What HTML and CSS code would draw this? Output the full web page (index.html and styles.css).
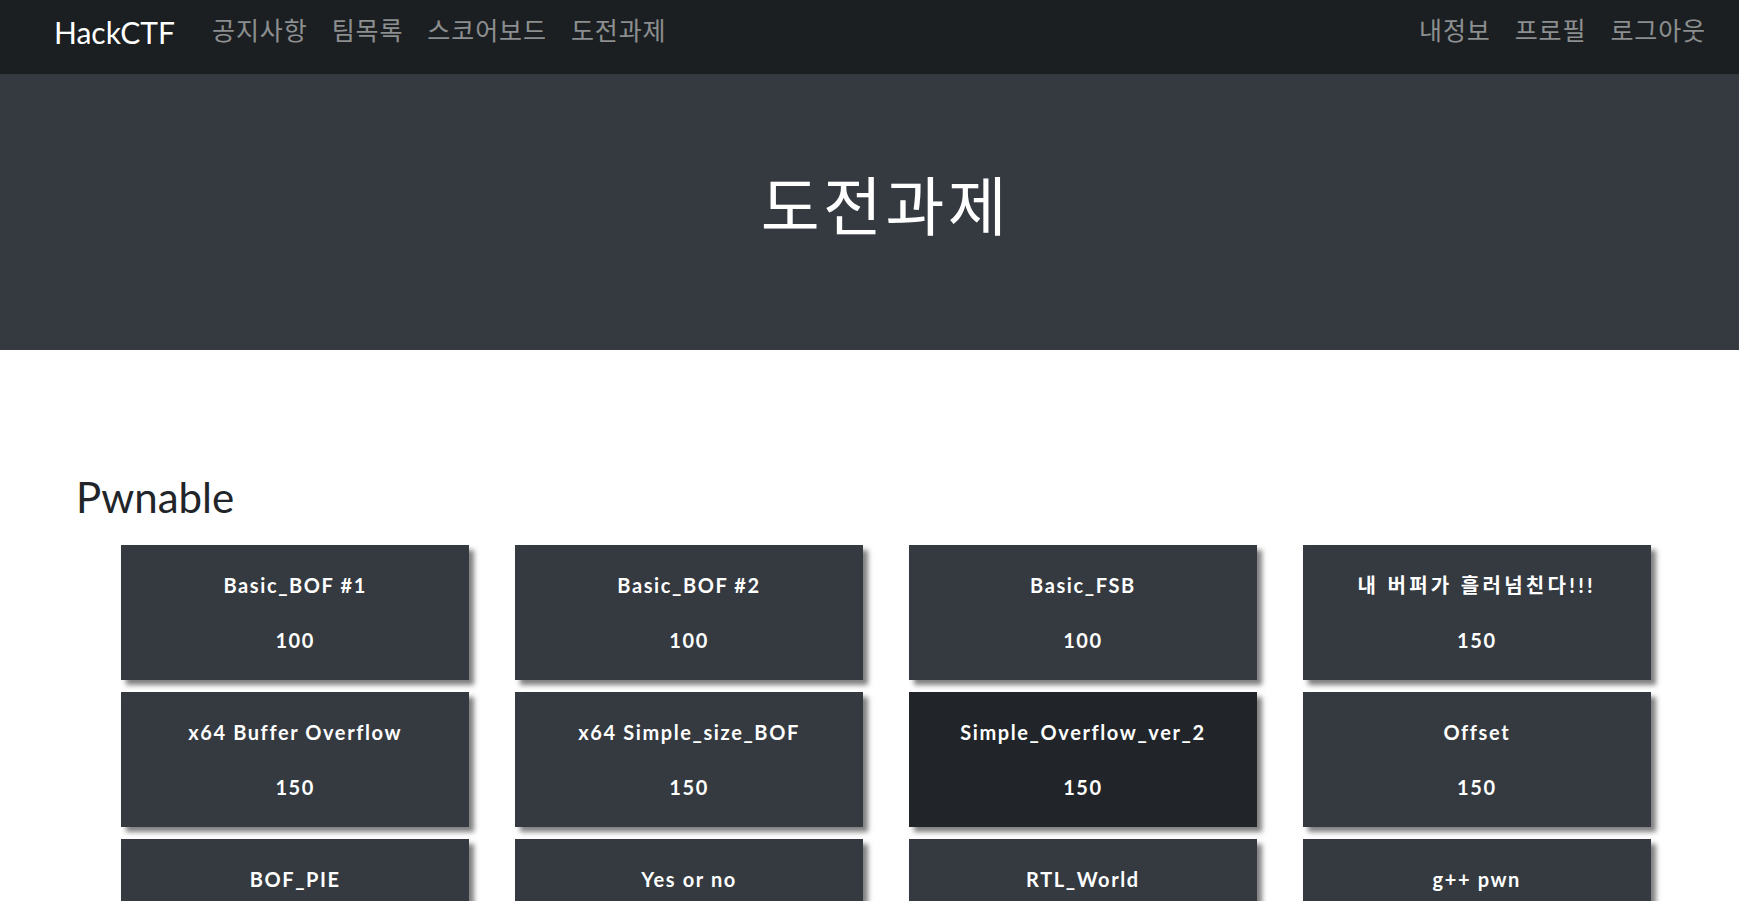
FILE: index.html
```html
<!DOCTYPE html>
<html lang="ko">
<head>
<meta charset="utf-8">
<title>HackCTF - 도전과제</title>
<link rel="stylesheet" href="styles.css">
</head>
<body>
<nav class="navbar">
  <a class="brand" href="#">HackCTF</a>
  <ul class="nav-left">
    <li><a href="#">공지사항</a></li>
    <li><a href="#">팀목록</a></li>
    <li><a href="#">스코어보드</a></li>
    <li><a href="#">도전과제</a></li>
  </ul>
  <ul class="nav-right">
    <li><a href="#">내정보</a></li>
    <li><a href="#">프로필</a></li>
    <li><a href="#">로그아웃</a></li>
  </ul>
</nav>
<header class="hero">
  <h1>도전과제</h1>
</header>
<main class="main">
  <h2 class="category">Pwnable</h2>
  <div class="grid">
    <a class="card" href="#"><span class="title">Basic_BOF #1</span><span class="points">100</span></a>
    <a class="card" href="#"><span class="title">Basic_BOF #2</span><span class="points">100</span></a>
    <a class="card" href="#"><span class="title">Basic_FSB</span><span class="points">100</span></a>
    <a class="card" href="#"><span class="title title-ko">내 버퍼가 흘러넘친다!!!</span><span class="points">150</span></a>
    <a class="card" href="#"><span class="title">x64 Buffer Overflow</span><span class="points">150</span></a>
    <a class="card" href="#"><span class="title">x64 Simple_size_BOF</span><span class="points">150</span></a>
    <a class="card card-active" href="#"><span class="title">Simple_Overflow_ver_2</span><span class="points">150</span></a>
    <a class="card" href="#"><span class="title">Offset</span><span class="points">150</span></a>
    <a class="card" href="#"><span class="title">BOF_PIE</span><span class="points">150</span></a>
    <a class="card" href="#"><span class="title">Yes or no</span><span class="points">150</span></a>
    <a class="card" href="#"><span class="title">RTL_World</span><span class="points">200</span></a>
    <a class="card" href="#"><span class="title">g++ pwn</span><span class="points">200</span></a>
  </div>
</main>
</body>
</html>
```

FILE: styles.css
```css
* { box-sizing: border-box; }
html, body { margin: 0; padding: 0; }
body {
  font-family: Lato, "Noto Sans CJK KR", sans-serif;
  color: #212529;
  background: #fff;
}
a { text-decoration: none; color: inherit; }
ul { list-style: none; margin: 0; padding: 0; }

.navbar {
  height: 74px;
  background: #1b1f22;
  display: flex;
  align-items: flex-start;
  padding: 11px 21px 0 54px;
}
.brand {
  font-family: Lato, sans-serif;
  font-size: 30px;
  line-height: 40px;
  color: #fff;
  margin-right: 25px;
  margin-top: 1px;
}
.nav-left, .nav-right {
  display: flex;
}
.nav-right { margin-left: auto; }
.nav-left a, .nav-right a {
  display: block;
  font-family: "Noto Sans CJK KR", sans-serif;
  font-size: 25px;
  line-height: 36px;
  letter-spacing: 0.9px;
  padding: 0 12px;
  color: rgba(255,255,255,0.5);
}

.hero {
  height: 276px;
  background: #343a40;
  display: flex;
  align-items: center;
  justify-content: center;
  padding: 0 0 20px 32px;
}
.hero h1 {
  margin: 0;
  font-family: "Noto Sans CJK KR", sans-serif;
  font-weight: 400;
  font-size: 64px;
  color: #fff;
  letter-spacing: 3.5px;
}

.main {
  padding: 119px 0 40px 0;
}
.category {
  margin: 0 0 20px 76px;
  font-family: Lato, sans-serif;
  font-weight: 400;
  font-size: 42px;
  line-height: 56px;
}
.grid {
  display: grid;
  grid-template-columns: repeat(4, 1fr);
  column-gap: 45.5px;
  row-gap: 12px;
  margin: 0 88px 0 121px;
}
.card {
  display: flex;
  flex-direction: column;
  align-items: center;
  gap: 27px;
  padding: 26px 10px;
  background: #343a40;
  color: #fff;
  font-weight: 700;
  font-size: 20px;
  line-height: 28px;
  letter-spacing: 1.6px;
  box-shadow: 5px 5px 5px rgba(0,0,0,0.5);
}
.title-ko { letter-spacing: 3.3px; }
.card-active { background: #212529; }
```
